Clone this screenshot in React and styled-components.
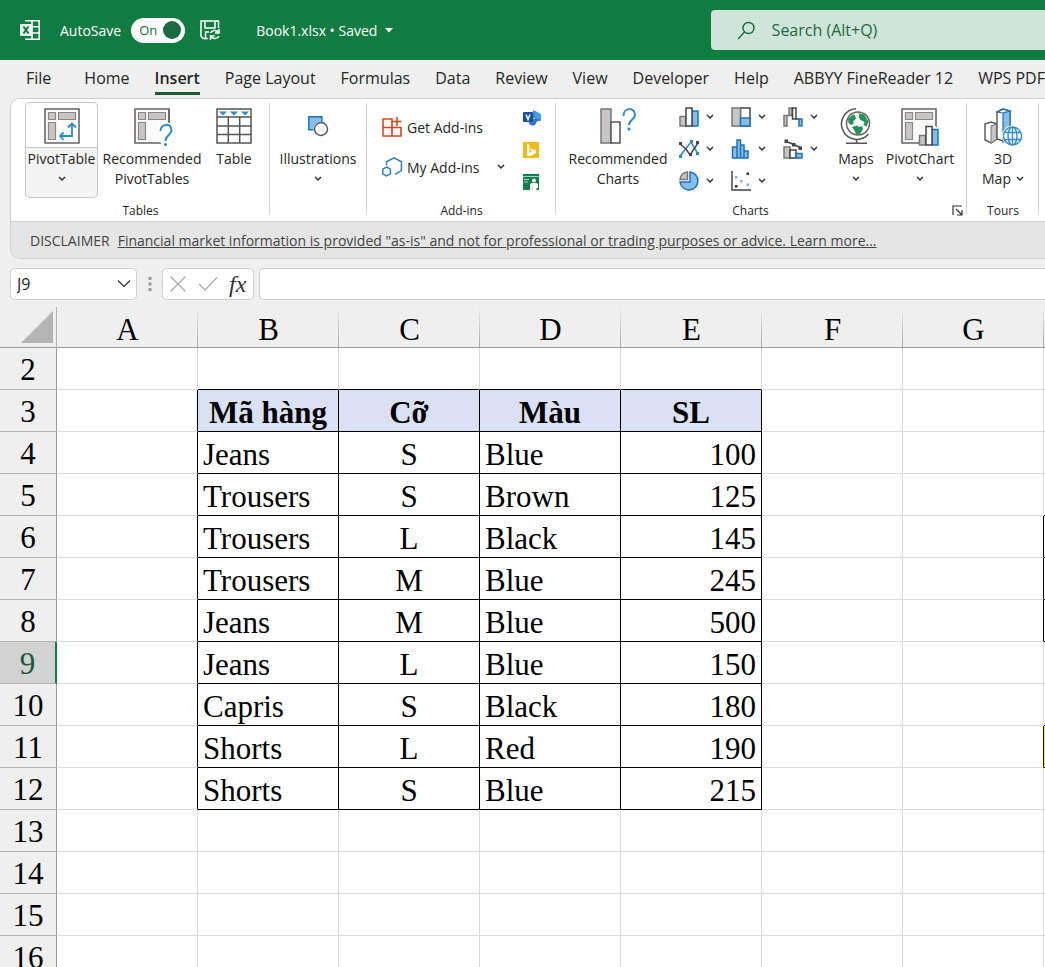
import React, { useState } from "react";
import styled, { createGlobalStyle, css } from "styled-components";

const ui = `"Open Sans", "Noto Sans", sans-serif`;
const serif = `"Liberation Serif", serif`;

const GlobalStyle = createGlobalStyle`
  *, *::before, *::after { box-sizing: border-box; }
  body { margin: 0; background: #efefef; color: #262626; font-family: ${ui}; }
  button, input { font: inherit; color: inherit; }
  button { margin: 0; padding: 0; border: 0; background: none; cursor: pointer; }
  svg { display: block; flex: none; overflow: visible; }
`;

const Window = styled.div`
  display: flex;
  flex-direction: column;
  height: 100vh;
  overflow: hidden;
`;

/* Title bar */
const TitleBar = styled.header`
  display: flex;
  align-items: center;
  flex: none;
  height: 60px;
  padding-left: 20px;
  background: #107c41;
  color: #fff;
  font-size: 14px;
  white-space: nowrap;
`;

const AutoSave = styled.label`
  display: flex;
  align-items: center;
  gap: 10px;
  margin: 0 15px 0 20px;
`;

const Switch = styled.span`
  position: relative;
  display: flex;
  align-items: center;
  width: 54px;
  height: 25px;
  padding-left: 8px;
  border-radius: 13px;
  background: #fff;
  color: #1b6b41;
  font-size: 13px;

  input {
    position: absolute;
    inset: 0;
    width: 100%;
    height: 100%;
    margin: 0;
    opacity: 0;
  }
  &::after {
    content: "";
    width: 18px;
    height: 18px;
    margin: 0 4px 0 auto;
    border-radius: 50%;
    background: #1b6b41;
  }
`;

const FileName = styled.button`
  display: flex;
  align-items: center;
  gap: 8px;
  margin-left: 36px;
`;

const SearchBox = styled.label`
  display: flex;
  align-items: center;
  gap: 16px;
  width: 32vw;
  height: 40px;
  margin-left: auto;
  padding-left: 26px;
  border-radius: 4px 0 0 4px;
  background: #cfe5d9;
  color: #1b6b41;
  font-size: 16px;

  input {
    flex: 1;
    min-width: 0;
    padding: 0;
    border: 0;
    outline: 0;
    background: none;
  }
  input::placeholder { color: #1b6b41; opacity: 1; }
`;

/* Ribbon tabs */
const Tabs = styled.nav`
  display: flex;
  flex: none;
  gap: 25px;
  height: 38px;
  padding-left: 26px;
  overflow: hidden;
`;

const Tab = styled.button`
  flex: none;
  height: 35px;
  padding-top: 4px;
  border-bottom: 3px solid ${(p) => (p.$active ? "#185c37" : "transparent")};
  font-size: 16px;
  font-weight: ${(p) => (p.$active ? 600 : 400)};
  line-height: 28px;
  white-space: nowrap;

  &:first-child { margin-right: 8px; }
`;

/* Ribbon */
const Panel = styled.div`
  flex: none;
  margin-left: 10px;
  border: 1px solid #d0d0d0;
  border-right: 0;
  border-radius: 10px 0 0 10px;
  overflow: hidden;
`;

const Ribbon = styled.div`
  display: flex;
  height: 122px;
  background: #fff;
  font-size: 14px;
`;

const Group = styled.section`
  position: relative;
  display: flex;
  flex-direction: column;
  flex: none;
  width: ${(p) => p.$width}px;
  padding-top: 3px;

  &::after {
    content: "";
    position: absolute;
    top: 4px;
    right: 0;
    bottom: 7px;
    width: 1px;
    background: #d4d4d4;
  }
`;

const GroupBody = styled.div`
  display: flex;
  align-items: flex-start;
  height: 98px;
  gap: ${(p) => p.$gap || 0}px;
  padding-left: ${(p) => p.$inset || 0}px;
`;

const GroupFooter = styled.div`
  display: flex;
  align-items: center;
  height: 20px;
  font-size: 12px;

  span { flex: 1; text-align: center; }
`;

const Launcher = styled.button`
  width: 22px;
  padding-left: 7px;
`;

const BigButton = styled.button`
  display: flex;
  flex-direction: column;
  align-items: center;
  flex: none;
  width: ${(p) => p.$width}px;
  height: 96px;
  line-height: 20px;
  border-radius: 5px;
  ${(p) =>
    p.$hot &&
    css`
      background: linear-gradient(#fff 45px, #c8c8c8 45px, #c8c8c8 46px, #f4f4f4 46px);
      box-shadow: inset 0 0 0 1px #c8c8c8;
    `}
`;

const IconBox = styled.span`
  display: flex;
  justify-content: center;
  align-items: ${(p) => (p.$small ? "center" : "flex-start")};
  height: 47px;
  padding-top: ${(p) => (p.$small ? 0 : 6)}px;
`;

const Line = styled.span`
  display: flex;
  align-items: center;
  justify-content: center;
  gap: 5px;
  min-height: 20px;
  white-space: nowrap;
`;

const AddInList = styled.div`
  display: flex;
  flex-direction: column;
  gap: 20px;
  width: 141px;
  padding-top: 15px;
`;

const AddInButton = styled.button`
  display: flex;
  align-items: center;
  gap: 5px;
  height: 20px;
  white-space: nowrap;

  svg:nth-of-type(2) { margin-left: 12px; }
`;

const AddInIcons = styled.div`
  display: flex;
  flex-direction: column;
  gap: 16px;
  padding-top: 8px;
`;

const ChartGrid = styled.div`
  display: grid;
  grid-template-columns: repeat(3, 52px);
  grid-auto-rows: 20px;
  gap: 12px 0;
  width: 164px;
  padding: 5px 0 0 8px;
`;

const ChartButton = styled.button`
  display: flex;
  align-items: center;
  gap: 7px;
`;

const Disclaimer = styled.div`
  display: flex;
  align-items: center;
  gap: 8px;
  height: 37px;
  padding-left: 19px;
  border-top: 1px solid #cfcfcf;
  background: #e5e5e5;
  color: #444;
  font-size: 14px;
  white-space: nowrap;

  a { color: inherit; }
`;

/* Formula bar */
const FormulaBar = styled.div`
  display: flex;
  align-items: center;
  flex: none;
  height: 48px;
  padding: 1px 0 0 10px;
`;

const Field = styled.div`
  display: flex;
  align-items: center;
  height: 32px;
  border: 1px solid #cfcfcf;
  border-radius: 5px;
  background: #fff;

  input {
    flex: 1;
    min-width: 0;
    padding: 0 6px;
    border: 0;
    outline: 0;
    background: none;
    font-size: 16px;
  }
`;

const NameBox = styled(Field)`
  width: 127px;
  padding-right: 5px;
`;

const Dots = styled.span`
  display: flex;
  justify-content: center;
  width: 25px;
`;

const FormulaTools = styled(Field)`
  gap: 11px;
  width: 92px;
  margin-right: 5px;
  padding-left: 6px;
`;

const FormulaInput = styled(Field)`
  flex: 1;
  border-right: 0;
  border-radius: 5px 0 0 5px;
`;

const Fx = styled.button`
  color: #333;
  font: italic 400 24px/28px ${serif};
`;

/* Worksheet */
const SheetArea = styled.main`
  flex: 1;
  min-height: 0;
  overflow: hidden;
  background: #fff;
`;

const Sheet = styled.table`
  width: 1185px;
  border-collapse: separate;
  border-spacing: 0;
  table-layout: fixed;
  color: #000;
  font: 31px/39px ${serif};

  th, td { height: 42px; padding: 0; }
  th { font-weight: 400; background-color: #efefef; }
  col { width: 141px; }
  col:first-child { width: 57px; }
`;

const Corner = styled.th`
  && { height: 41px; }
  border-bottom: 1px solid #9b9b9b;
  border-right: 1px solid #b4b4b4;

  svg { margin: 0 3px 0 auto; }
`;

const ColumnHead = styled.th`
  && { height: 41px; padding-top: 6px; }
  border-bottom: 1px solid #9b9b9b;
  background: linear-gradient(#efefef, #a8a8a8) right / 1px 100% no-repeat;
  line-height: 34px;
`;

const RowHead = styled.th`
  && { padding-top: 2px; }
  border-bottom: 1px solid #b4b4b4;
  border-right: 1px solid #9b9b9b;
  ${(p) =>
    p.$current &&
    css`
      && { background: #d2d2d2; }
      border-right: 2px solid #107c41;
      color: #185c37;
    `}
`;

const Cell = styled.td`
  border-right: 1px solid ${(p) => (p.$right ? "#000" : "#dcdcdc")};
  border-bottom: 1px solid ${(p) => (p.$bottom ? "#000" : "#dcdcdc")};
  background: ${(p) => p.$fill || "#fff"};
  font-weight: ${(p) => (p.$bold ? 700 : 400)};
  text-align: ${(p) => p.$align || "left"};
  line-height: 37px;
  white-space: nowrap;
  && { padding: ${(p) => (p.$align === "center" ? "4px 0 0" : "4px 5px 0")}; }
`;

/* Icons */
const Icon = ({ w = 20, h = w, children, ...rest }) => (
  <svg width={w} height={h} viewBox={`0 0 ${w} ${h}`} fill="none" aria-hidden="true" {...rest}>
    {children}
  </svg>
);

const Chevron = () => (
  <Icon w={8} h={6}><path d="M1 1l3 3 3-3" stroke="#333" strokeWidth="1.5" /></Icon>
);

const ExcelLogo = () => (
  <Icon>
    <path d="M5 .8h14.2v18.4H5M5 6.8h14M5 13h14M12 1v18" stroke="#fff" strokeWidth="1.6" />
    <rect y="4" width="12" height="12" rx="1" fill="#e9f4ee" />
    <path d="M3.5 6.5l5 7M8.5 6.5l-5 7" stroke="#107c41" strokeWidth="2" />
  </Icon>
);

const SaveSync = () => (
  <Icon stroke="#fff" strokeWidth="1.5">
    <path d="M8 18.5H3.2L1 16.3V1h17.5v7M5 1v7h10V1M5.5 18v-6H9" />
    <path d="M19 9v4h-4M10.5 13a4.6 4.6 0 0 1 8-.5M10.5 19.8v-4h4M19 16a4.6 4.6 0 0 1-8 .5" />
  </Icon>
);

const SearchIcon = () => (
  <Icon w={19} stroke="#1b6b41" strokeWidth="1.4">
    <circle cx="11.5" cy="7" r="5.5" /><path d="M7.5 11L1 18" />
  </Icon>
);

const PivotFrame = ({ d }) => (
  <>
    <path d={d} fill="#fafafa" stroke="#666" strokeWidth="1.6" />
    <path d="M4.500 4.500h7v7h-7zM14.500 4.500h17v7h-17zM4.500 14.500h7v17h-7z" fill="#c8c6c4" stroke="#8a8886" strokeWidth="1.2" />
  </>
);

const PivotTableIcon = () => (
  <Icon w={36}>
    <PivotFrame d="M1 1h34v34H1z" />
    <path d="M28 16v12H16M24 19.5l4-4 4 4M19.5 24.5L16 28l3.5 4" stroke="#2e8bc9" strokeWidth="1.8" />
  </Icon>
);

const PivotSuggestIcon = () => (
  <Icon w={36}>
    <PivotFrame d="M27 35H1V1h34v14" />
    <path d="M24 15h12v21h-9z" fill="#fff" />
    <path d="M35 1v13" stroke="#666" strokeWidth="1.6" />
    <path d="M26.5 23c0-8 11-8 11-1 0 5-6 5-6 11" stroke="#2e8bc9" strokeWidth="2" />
    <circle cx="31.5" cy="36.5" r="1.5" fill="#2e8bc9" />
  </Icon>
);

const TableIcon = () => (
  <Icon w={36}>
    <path d="M1 1h34v34H1zM1 9h34M1 18h34M1 26.5h34M12.3 9v26M23.700 9v26" stroke="#555" strokeWidth="1.5" />
    <path d="M3 3.5h8L7 7.5zM14 3.5h8l-4 4zM25 3.5h8l-4 4z" fill="#2e8bc9" />
  </Icon>
);

const ShapesIcon = () => (
  <Icon>
    <path d="M.8.8h13v13h-13z" fill="#83beec" stroke="#1f72b8" strokeWidth="1.5" />
    <circle cx="13" cy="13" r="7.5" fill="#fff" />
    <circle cx="13" cy="13" r="6.5" fill="#fdfdfd" stroke="#555" strokeWidth="1.4" />
  </Icon>
);

const StoreIcon = () => (
  <Icon stroke="#d8441c" strokeWidth="1.6">
    <path d="M1 2h9v17H1zM1 10.5h18V19h-9M15 0v9M10.5 4.5h9" />
  </Icon>
);

const HexIcon = () => (
  <Icon stroke="#2d7fc1" strokeWidth="1.5">
    <path d="M4.5 8V4.8L12 .8l7.4 4v8.8L13 17.400" />
    <path d="M4.500 10l3.900 2.200v4.600L4.500 19 .8 16.800v-4.600z" />
  </Icon>
);

const VisioIcon = () => (
  <Icon w={18} h={16}>
    <path d="M10 0l7 4v6l-7-2z" fill="#3e8ddd" /><path d="M12 1l6 3v7h-6z" fill="#41a0ea" />
    <path d="M5 9h11l-5 6.500z" fill="#2b68c4" /><circle cx="9.500" cy="12" r="3.500" fill="#3475d0" />
    <rect y="2" width="10" height="10" rx="1" fill="#174fa5" />
    <path d="M3 4.500l2 5 2-5" stroke="#fff" strokeWidth="1.5" />
  </Icon>
);

const BingIcon = () => (
  <Icon w={16}>
    <path d="M0 0h16v16H0z" fill="#f3b916" />
    <path d="M4 2l2.500 1v8l2-1.500L7 6l6 2.500v2.500l-6.500 3.500L4 13z" fill="#fff" />
  </Icon>
);

const PeopleIcon = () => (
  <Icon w={16}>
    <path d="M0 0h16v16H0z" fill="#11804d" />
    <path d="M0 2.500h16M1 5.500h5M1 8h4" stroke="#a6d8bd" />
    <circle cx="11" cy="6.500" r="2" fill="#fff" />
    <path d="M7 16v-5q0-2 2-2h4q2 0 2 2v3h-1.500v2h-4v-4L9 16z" fill="#fff" />
  </Icon>
);

const RecChartIcon = () => (
  <Icon w={36}>
    <path d="M1 1h10v34H1z" fill="#c8c6c4" stroke="#777" strokeWidth="1.5" />
    <path d="M11 14h9v21h-9z" fill="#fff" stroke="#555" strokeWidth="1.5" />
    <path d="M23.500 8c0-9 11.500-9 11.500-1 0 5-6 4-6 10" stroke="#2e8bc9" strokeWidth="2" />
    <circle cx="29" cy="21" r="1.600" fill="#2e8bc9" />
  </Icon>
);

const blue = { fill: "#83beec", stroke: "#1f72b8", strokeWidth: 1.5 };
const grey = { fill: "#c8c6c4", stroke: "#777", strokeWidth: 1.5 };
const line = { fill: "#fff", stroke: "#444", strokeWidth: 1.5 };

const ColumnIcon = () => (
  <Icon><path d="M1 9.500h6V19H1z" {...grey} /><path d="M13 4h6v15h-6z" {...blue} /><path d="M7 1h6v18H7z" {...line} /></Icon>
);
const TreemapIcon = () => (
  <Icon><path d="M9.500 1H19v18H9.500z" {...line} /><path d="M1 1h8.500v18H1z" {...grey} /><path d="M9.500 11H19v8H9.500z" {...blue} /></Icon>
);
const WaterfallIcon = () => (
  <Icon>
    <path d="M1 8.500h3V19H1zM6 1h3v7.500H6zM4 8.500h3" {...grey} />
    <path d="M9.500 1H13v11H9.500z" {...line} /><path d="M13 12h3" stroke="#444" strokeWidth="1.5" />
    <path d="M16 12h3v7h-3z" {...blue} />
  </Icon>
);
const LineIcon = () => (
  <Icon>
    <path d="M1 17l11-14 7 12" stroke="#2e8bc9" strokeWidth="1.5" />
    <path d="M1 5l6 5 4 6 8-12" stroke="#444" strokeWidth="1.5" />
    <path d="M0 16h3v3H0zM11 1h3v3h-3zM17 13h3v3h-3z" fill="#2e8bc9" />
    <path d="M0 3h3v3H0zM10 14h3v3h-3zM17 2h3v3h-3z" fill="#444" />
  </Icon>
);
const HistogramIcon = () => (
  <Icon><path d="M1.500 8H6v11H1.500zM6 1h3.500v18H6zM9.500 6H13v13H9.500zM13 12h4v7h-4z" {...blue} /></Icon>
);
const ComboIcon = () => (
  <Icon>
    <path d="M1 8h6v11H1z" {...grey} /><path d="M7 11h6v8H7z" {...line} /><path d="M13 14.500h6V19h-6z" {...blue} />
    <path d="M3 2.500l8 3L18 9" stroke="#444" strokeWidth="1.5" />
    <path d="M1.500.5h3.500V4H1.500zM9 4h3.500v3.500H9zM15.500 7.500H19V11h-3.500z" fill="#444" />
  </Icon>
);
const PieIcon = () => (
  <Icon>
    <path d="M11 1a9 9 0 1 1-10 10H11z" {...blue} />
    <path d="M8.500 1v7.500H1A8 8 0 0 1 8.500 1z" {...grey} />
  </Icon>
);
const ScatterIcon = () => (
  <Icon>
    <path d="M1 0v19h19" stroke="#444" strokeWidth="1.5" />
    <path d="M15.500 1.500h2.500V4h-2.500zM4 14h2.500v2.500H4z" fill="#333" />
    <path d="M4 5h2.500v2.500H4zM9 9h2.500v2.500H9zM15.500 12.500h2.500V15h-2.500z" fill="#7ab6df" />
  </Icon>
);

const GlobeIcon = () => (
  <Icon w={30} h={36}>
    <path d="M15 .8A15.300 15.300 0 1 0 27.500 26" stroke="#555" strokeWidth="1.500" />
    <circle cx="17" cy="15.500" r="11.500" fill="#fff" stroke="#666" strokeWidth="1.500" />
    <path d="M7 11l5-4.500 2 1 1 3-3 3 1 2-3 1.500-2.500-2zM17 5l6 1.500 4.500 7-2 5-3-1.500 1-3-4-2-2-3 1-2zM11 19l5-1.500 2 1.500 3-1 1 3-3 5-4 .5-1-3z" fill="#239457" />
    <path d="M15.500 31v4M5 35.200h21" stroke="#555" strokeWidth="1.500" />
  </Icon>
);

const PivotChartIcon = () => (
  <Icon w={38}>
    <PivotFrame d="M18 35H1V1h34v18" />
    <path d="M18 26h7v-8h10v18H18z" fill="#fff" />
    <path d="M18.500 27.500h6V37h-6z" {...grey} /><path d="M31 21.500h6V37h-6z" {...blue} /><path d="M25 18.500h6V37h-6z" {...line} />
  </Icon>
);

const Map3dIcon = () => (
  <Icon w={38}>
    <path d="M1 16l6-2 6 2v15l-6 4-6-3z" fill="#fff" stroke="#555" strokeWidth="1.4" />
    <path d="M7 18l6-2v15l-6 4z" fill="#c8c6c4" stroke="#777" />
    <path d="M13 4l6-3 7 2v26l-7 4-6-2z" fill="#fff" stroke="#555" strokeWidth="1.4" />
    <path d="M19 4l7-1v29l-7 1z" fill="#83beec" />
    <path d="M13 4l6-3 7 2-7 2zM19 5v29l7-1V3" stroke="#1f72b8" strokeWidth="1.2" />
    <circle cx="28.500" cy="28" r="10.500" fill="#fff" />
    <path d="M19.500 28a9 9 0 1 0 18 0 9 9 0 1 0-18 0M24 28a4.500 9 0 1 0 9 0 4.500 9 0 1 0-9 0M28.500 19v18M20.500 24.500h16M20.500 31.500h16" stroke="#2e8bc9" strokeWidth="1.4" />
  </Icon>
);

const TABS = ["File", "Home", "Insert", "Page Layout", "Formulas", "Data", "Review", "View", "Developer", "Help", "ABBYY FineReader 12", "WPS PDF"];

const CHART_TYPES = [
  ["Column", ColumnIcon], ["Hierarchy", TreemapIcon], ["Waterfall", WaterfallIcon],
  ["Line", LineIcon], ["Statistic", HistogramIcon], ["Combo", ComboIcon],
  ["Pie", PieIcon], ["Scatter", ScatterIcon],
];

const COLUMNS = ["A", "B", "C", "D", "E", "F", "G", ""];

const DATA = {
  3: ["Mã hàng", "Cỡ", "Màu", "SL"],
  4: ["Jeans", "S", "Blue", "100"],
  5: ["Trousers", "S", "Brown", "125"],
  6: ["Trousers", "L", "Black", "145"],
  7: ["Trousers", "M", "Blue", "245"],
  8: ["Jeans", "M", "Blue", "500"],
  9: ["Jeans", "L", "Blue", "150"],
  10: ["Capris", "S", "Black", "180"],
  11: ["Shorts", "L", "Red", "190"],
  12: ["Shorts", "S", "Blue", "215"],
};

const ROWS = Array.from({ length: 15 }, (_, i) => i + 2);
const ALIGN = ["left", "center", "left", "right"];

function cellProps(row, col) {
  const inTable = row >= 3 && row <= 12;
  const tableCol = col >= 1 && col <= 4;
  const sideRow = (row >= 6 && row <= 8) || row === 11;
  return {
    $right: (inTable && col <= 4) || (col === 6 && sideRow),
    $bottom: (tableCol && row >= 2 && row <= 12) || (col === 7 && ((row >= 5 && row <= 8) || row === 10 || row === 11)),
    $fill: row === 3 && tableCol ? "#d9e1f2" : row === 11 && col === 7 ? "#ffff00" : undefined,
    $bold: row === 3,
    $align: row === 3 ? "center" : ALIGN[col - 1],
  };
}

const Big = ({ icon, small, lines, chevron, inline, ...rest }) => (
  <BigButton {...rest}>
    <IconBox $small={small}>{icon}</IconBox>
    {lines.map((text, i) => (
      <Line key={text}>{text}{inline && i === lines.length - 1 && <Chevron />}</Line>
    ))}
    {chevron && <Line><Chevron /></Line>}
  </BigButton>
);

export default function App() {
  const [saving, setSaving] = useState(true);
  return (
    <Window>
      <GlobalStyle />
      <TitleBar>
        <ExcelLogo />
        <AutoSave>
          AutoSave
          <Switch>
            <input type="checkbox" role="switch" checked={saving} onChange={(e) => setSaving(e.target.checked)} />
            {saving ? "On" : "Off"}
          </Switch>
        </AutoSave>
        <button aria-label="Save"><SaveSync /></button>
        <FileName>
          Book1.xlsx • Saved
          <Icon w={8} h={5}><path d="M0 0h8L4 4.500z" fill="#fff" /></Icon>
        </FileName>
        <SearchBox>
          <SearchIcon />
          <input type="text" aria-label="Search" placeholder="Search (Alt+Q)" />
        </SearchBox>
      </TitleBar>

      <Tabs>
        {TABS.map((name) => <Tab key={name} $active={name === "Insert"}>{name}</Tab>)}
      </Tabs>

      <Panel>
        <Ribbon>
          <Group $width={259}>
            <GroupBody $inset={14} $gap={2}>
              <Big $width={73} $hot icon={<PivotTableIcon />} lines={["PivotTable"]} chevron />
              <Big $width={104} icon={<PivotSuggestIcon />} lines={["Recommended", "PivotTables"]} />
              <Big $width={56} icon={<TableIcon />} lines={["Table"]} />
            </GroupBody>
            <GroupFooter><span>Tables</span></GroupFooter>
          </Group>
          <Group $width={97}>
            <GroupBody $inset={6}>
              <Big $width={84} small icon={<ShapesIcon />} lines={["Illustrations"]} chevron />
            </GroupBody>
          </Group>
          <Group $width={189}>
            <GroupBody $inset={15}>
              <AddInList>
                <AddInButton><StoreIcon />Get Add-ins</AddInButton>
                <AddInButton><HexIcon />My Add-ins<Chevron /></AddInButton>
              </AddInList>
              <AddInIcons>
                <button aria-label="Visio Data Visualizer"><VisioIcon /></button>
                <button aria-label="Bing Maps"><BingIcon /></button>
                <button aria-label="People Graph"><PeopleIcon /></button>
              </AddInIcons>
            </GroupBody>
            <GroupFooter><span>Add-ins</span></GroupFooter>
          </Group>
          <Group $width={411}>
            <GroupBody $inset={9}>
              <Big $width={106} icon={<RecChartIcon />} lines={["Recommended", "Charts"]} />
              <ChartGrid>
                {CHART_TYPES.map(([name, Glyph]) => (
                  <ChartButton key={name} aria-label={name}><Glyph /><Chevron /></ChartButton>
                ))}
              </ChartGrid>
              <Big $width={42} icon={<GlobeIcon />} lines={["Maps"]} chevron />
              <Big $width={86} icon={<PivotChartIcon />} lines={["PivotChart"]} chevron />
            </GroupBody>
            <GroupFooter>
              <span>Charts</span>
              <Launcher aria-label="All charts">
                <Icon w={11}><path d="M1 10V1h9M4 4l6 6M10 5v5H5" stroke="#333" strokeWidth="1.2" /></Icon>
              </Launcher>
            </GroupFooter>
          </Group>
          <Group $width={72}>
            <GroupBody $inset={4}>
              <Big $width={64} icon={<Map3dIcon />} lines={["3D", "Map"]} inline />
            </GroupBody>
            <GroupFooter><span>Tours</span></GroupFooter>
          </Group>
        </Ribbon>
        <Disclaimer>
          <span>DISCLAIMER</span>
          <a href="#learn-more">Financial market information is provided "as-is" and not for professional or trading purposes or advice. Learn more...</a>
        </Disclaimer>
      </Panel>

      <FormulaBar>
        <NameBox>
          <input type="text" aria-label="Name box" defaultValue="J9" />
          <Icon w={14} h={9}><path d="M1 1.500l6 6 6-6" stroke="#444" strokeWidth="1.5" /></Icon>
        </NameBox>
        <Dots><Icon w={4} h={14}><path d="M.5 0h3v3h-3zM.5 5.500h3v3h-3zM.5 11h3v3h-3z" fill="#999" /></Icon></Dots>
        <FormulaTools>
          <button aria-label="Cancel"><Icon w={18} h={16}><path d="M1.500.5l15 15M16.500.5l-15 15" stroke="#aaa" strokeWidth="1.3" /></Icon></button>
          <button aria-label="Enter"><Icon w={20} h={16}><path d="M1 8l6 6L19 1.500" stroke="#aaa" strokeWidth="1.3" /></Icon></button>
          <Fx aria-label="Insert function">fx</Fx>
        </FormulaTools>
        <FormulaInput><input type="text" aria-label="Formula" /></FormulaInput>
      </FormulaBar>

      <SheetArea>
        <Sheet>
          <colgroup><col />{COLUMNS.map((c) => <col key={c} />)}</colgroup>
          <thead>
            <tr>
              <Corner aria-label="Select all"><Icon w={32}><path d="M32 0v32H0z" fill="#b4b4b4" /></Icon></Corner>
              {COLUMNS.map((c) => <ColumnHead key={c} scope="col">{c}</ColumnHead>)}
            </tr>
          </thead>
          <tbody>
            {ROWS.map((row) => (
              <tr key={row}>
                <RowHead scope="row" $current={row === 9}>{row}</RowHead>
                {COLUMNS.map((c, col) => (
                  <Cell key={c} {...cellProps(row, col)}>{DATA[row]?.[col - 1]}</Cell>
                ))}
              </tr>
            ))}
          </tbody>
        </Sheet>
      </SheetArea>
    </Window>
  );
}
